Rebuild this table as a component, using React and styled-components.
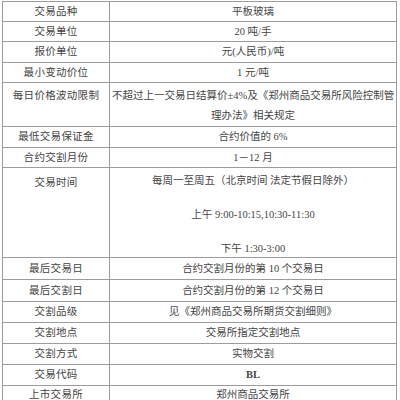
import React from "react";
import styled, { createGlobalStyle } from "styled-components";

const GlobalStyle = createGlobalStyle`
  html, body {
    margin: 0;
    padding: 0;
    background: #ffffff;
  }
  body {
    font-family: "Liberation Serif", "Noto Sans CJK SC", serif;
    color: #444444;
  }
`;

const Page = styled.div`
  width: 400px;
  height: 400px;
  padding: 1px 3px 0 2px;
  box-sizing: border-box;
  overflow: hidden;
`;

const Table = styled.table`
  width: 395px;
  border-collapse: collapse;
  table-layout: fixed;
  font-size: 10.5px;
  border: 1.5px solid #8f8f8f;
`;

const Row = styled.tr`
  height: ${(p) => p.$h}px;
`;

const Cell = styled.td`
  border: 1px solid #9c9c9c;
  text-align: center;
  vertical-align: ${(p) => (p.$top ? "top" : "middle")};
  padding: ${(p) => (p.$top ? `${p.$top}px 2px 0` : "0 2px")};
  line-height: ${(p) => (p.$top ? "20px" : "14px")};
  white-space: nowrap;
`;

const Label = styled(Cell)`
  letter-spacing: 0.3px;
`;

const Value = styled(Cell)`
  b {
    font-weight: 700;
  }
`;

const LineStack = styled.div`
  display: flex;
  flex-direction: column;
  gap: 18px;
  line-height: 16px;
`;

const rows = [
  { label: "交易品种", value: "平板玻璃", h: 20 },
  { label: "交易单位", value: "20 吨/手", h: 20 },
  { label: "报价单位", value: "元(人民币)/吨", h: 21 },
  { label: "最小变动价位", value: "1 元/吨", h: 20 },
  {
    label: "每日价格波动限制",
    value: (
      <>
        不超过上一交易日结算价±4%及《郑州商品交易所风险控制管
        <br />
        理办法》相关规定
      </>
    ),
    h: 40,
    top: 3,
  },
  { label: "最低交易保证金", value: "合约价值的 6%", h: 21 },
  { label: "合约交割月份", value: "1－12 月", h: 20 },
  {
    label: "交易时间",
    value: (
      <LineStack>
        <div>每周一至周五（北京时间 法定节假日除外）</div>
        <div>上午 9:00-10:15,10:30-11:30</div>
        <div>下午 1:30-3:00</div>
      </LineStack>
    ),
    h: 89,
    top: 5,
  },
  { label: "最后交易日", value: "合约交割月份的第 10 个交易日", h: 22 },
  { label: "最后交割日", value: "合约交割月份的第 12 个交易日", h: 22 },
  { label: "交割品级", value: "见《郑州商品交易所期货交割细则》", h: 21 },
  { label: "交割地点", value: "交易所指定交割地点", h: 21 },
  { label: "交割方式", value: "实物交割", h: 21 },
  { label: "交易代码", value: <b>BL</b>, h: 21 },
  { label: "上市交易所", value: "郑州商品交易所", h: 19 },
];

export default function App() {
  return (
    <>
      <GlobalStyle />
      <Page>
        <Table>
          <colgroup>
            <col style={{ width: 107 }} />
            <col />
          </colgroup>
          <tbody>
            {rows.map((r) => (
              <Row key={r.label} $h={r.h}>
                <Label $top={r.top}>{r.label}</Label>
                <Value $top={r.top}>{r.value}</Value>
              </Row>
            ))}
          </tbody>
        </Table>
      </Page>
    </>
  );
}
